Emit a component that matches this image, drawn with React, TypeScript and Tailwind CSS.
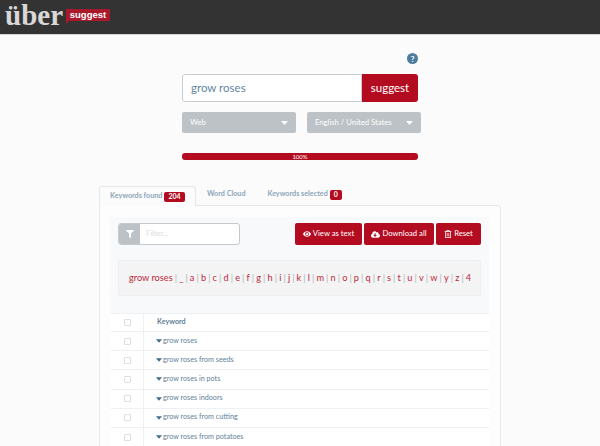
import React from "react";
import { FaEye, FaCloudDownloadAlt, FaRegTrashAlt, FaFilter } from "react-icons/fa";

const font = "font-['Lato','Liberation_Sans',sans-serif]";

const letters = ["_", "a", "b", "c", "d", "e", "f", "g", "h", "i", "j", "k", "l", "m", "n", "o", "p", "q", "r", "s", "t", "u", "v", "w", "y", "z", "4"];

const keywords = [
  "grow roses",
  "grow roses from seeds",
  "grow roses in pots",
  "grow roses indoors",
  "grow roses from cutting",
  "grow roses from potatoes",
];

const Caret = ({ className }: { className: string }) => (
  <svg viewBox="0 0 10 6" className={className} fill="currentColor">
    <path d="M0 0h10L5 6z" />
  </svg>
);

const Badge = ({ children }: { children: React.ReactNode }) => (
  <span className="ml-[2px] inline-flex h-[10px] items-center rounded-[2px] bg-[#b30b20] px-[4px] text-[7px] font-bold text-white">
    {children}
  </span>
);

const Select = ({ label, className }: { label: string; className: string }) => (
  <div className={`flex h-[21px] items-center justify-between rounded-[2px] bg-[#bcc2c6] pl-[8px] pr-[8px] text-[7.7px] text-white ${className}`}>
    <span>{label}</span>
    <Caret className="h-[4px] w-[7px]" />
  </div>
);

const ActionButton = ({ icon, label, className }: { icon: React.ReactNode; label: string; className: string }) => (
  <button className={`flex h-[22px] items-center justify-center gap-[2px] rounded-[2px] bg-[#b30b20] text-[7.7px] text-white ${className}`}>
    {icon}
    {label}
  </button>
);

const Check = () => <span className="block h-[7px] w-[7px] rounded-[1px] border border-[#dcdfe1] bg-white" />;

export default function App() {
  return (
    <div className={`${font} flex h-[446px] w-[600px] flex-col overflow-hidden bg-[#fbfbfb]`}>
      {/* header */}
      <header className="flex h-[35px] shrink-0 items-center border-b border-[#d5d5d5] bg-[#333333] pl-[5px]">
        <span className="mb-[4px] font-['Liberation_Serif',serif] text-[29px] font-bold leading-[30px] text-[#d8d8d8]">
          über
        </span>
        <span className="relative mb-[5px] ml-[3px] flex h-[12px] w-[44px] items-center justify-center bg-[#a8192b] font-['Liberation_Sans',sans-serif] text-[9.5px] font-bold leading-none text-white">
          suggest
          <span className="absolute left-0 top-full h-0 w-0 border-r-[3px] border-t-[3px] border-r-transparent border-t-[#a8192b]" />
        </span>
      </header>

      {/* search */}
      <section className="flex flex-col items-center">
        <div className="flex w-[236px] justify-end pt-[18px]">
          <span className="flex h-[11px] w-[11px] items-center justify-center rounded-full bg-[#4d7c9f] text-[8px] font-bold text-white">?</span>
        </div>
        <div className="mt-[10px] flex h-[28px] w-[236px]">
          <div className="flex flex-1 items-center rounded-l-[3px] border border-[#c9cdd0] bg-white pl-[8px] text-[11.5px] text-[#5f87a3]">
            grow roses
          </div>
          <div className="flex w-[56px] items-center justify-center rounded-r-[3px] bg-[#b30b20] text-[11.5px] text-white">
            suggest
          </div>
        </div>
        <div className="mt-[10px] flex w-[236px] gap-[11px]">
          <Select label="Web" className="w-[114px] shrink-0" />
          <Select label="English / United States" className="w-[114px] shrink-0" />
        </div>
        <div className="mt-[20px] flex h-[7px] w-[236px] items-center justify-center rounded-[3px] bg-[#b30b20] text-[6px] text-white">
          100%
        </div>
      </section>

      {/* tabs */}
      <section className="ml-[99px] mt-[26px] w-[402px]">
        <div className="relative z-10 flex h-[19px] items-stretch whitespace-nowrap text-[7.2px] font-bold text-[#8ea6b8]">
          <div className="mb-[-1px] flex w-[97px] items-center rounded-t-[3px] border border-b-0 border-[#e3e8ec] bg-[#fbfbfb] pl-[10px]">
            Keywords found <Badge>204</Badge>
          </div>
          <div className="ml-[11px] flex items-center pb-[2px]">Word Cloud</div>
          <div className="ml-[22px] flex items-center pb-[2px]">
            Keywords selected <Badge>0</Badge>
          </div>
        </div>

        <div className="rounded-tr-[3px] border border-[#e3e8ec] bg-[#fdfdfd] pl-[10px] pr-[11px] pt-[11px]">
          <div className="rounded-[2px] bg-[#f7f9fb] px-[8px] pt-[6px]">
            <div className="flex items-center justify-between">
              <div className="flex h-[22px] w-[122px] overflow-hidden rounded-[3px] border border-[#c3c9cd] bg-white">
                <div className="flex w-[21px] items-center justify-center bg-[#bcc2c6]">
                  <FaFilter className="h-[8px] w-[8px] text-white" />
                </div>
                <span className="flex items-center pl-[6px] text-[7.5px] text-[#d9dde0]">Filter...</span>
              </div>
              <div className="flex gap-[2px]">
                <ActionButton icon={<FaEye className="h-[8px] w-[8px]" />} label="View as text" className="w-[67px]" />
                <ActionButton icon={<FaCloudDownloadAlt className="h-[9px] w-[9px]" />} label="Download all" className="w-[70px]" />
                <ActionButton icon={<FaRegTrashAlt className="h-[8px] w-[8px]" />} label="Reset" className="w-[45px]" />
              </div>
            </div>
            <div className="mt-[15px] flex h-[36px] items-center whitespace-nowrap rounded-[2px] border border-[#eeeff0] bg-[#f4f4f4] pl-[10px] text-[9.2px] text-[#bb2a3c]">
              grow roses
              {letters.map((l) => (
                <React.Fragment key={l}>
                  <span className="mx-[2.1px] text-[#a9b6bf]">|</span>
                  <span>{l}</span>
                </React.Fragment>
              ))}
            </div>
          </div>

          {/* keyword table */}
          <div className="text-[7.2px] text-[#5f7f98]">
            <div className="h-[17px] bg-[#f7f9fb]" />
            <div className="ml-[1px] bg-white">
              <div className="flex h-[19px] items-center border-y border-[#edf1f4]">
                <div className="flex h-full w-[33px] items-center justify-center border-r border-[#edf1f4]">
                  <Check />
                </div>
                <span className="pl-[13px] font-bold">Keyword</span>
              </div>
              {keywords.map((k) => (
                <div key={k} className="flex h-[19.2px] items-center border-b border-[#edf1f4]">
                  <div className="flex h-full w-[33px] items-center justify-center border-r border-[#edf1f4]">
                    <Check />
                  </div>
                  <Caret className="ml-[12px] h-[4px] w-[6px] text-[#3f6c8e]" />
                  <span className="pl-[1px]">{k}</span>
                </div>
              ))}
            </div>
          </div>
        </div>
      </section>
    </div>
  );
}
